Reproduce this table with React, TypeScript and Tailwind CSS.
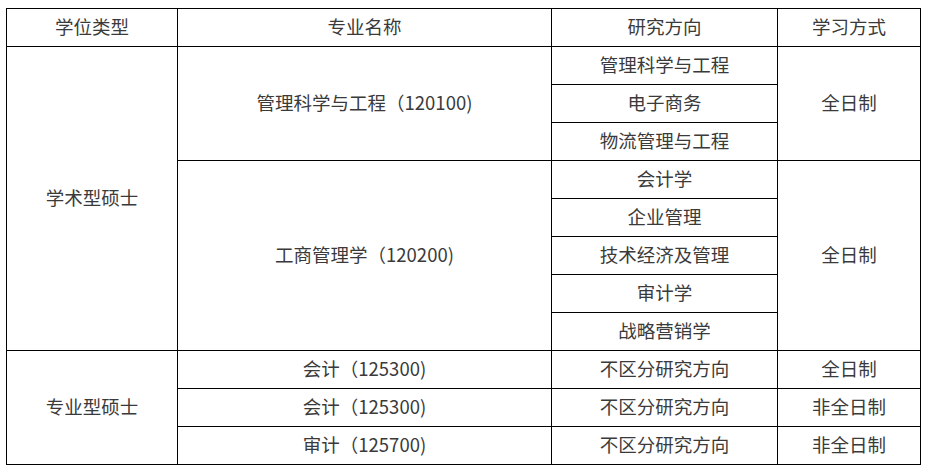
import React from "react";

interface MajorRow {
  degree?: { label: string; span: number };
  major?: { label: string; span: number };
  direction: string;
  mode?: { label: string; span: number };
}

const rows: MajorRow[] = [
  {
    degree: { label: "学术型硕士", span: 8 },
    major: { label: "管理科学与工程（120100)", span: 3 },
    direction: "管理科学与工程",
    mode: { label: "全日制", span: 3 },
  },
  { direction: "电子商务" },
  { direction: "物流管理与工程" },
  {
    major: { label: "工商管理学（120200)", span: 5 },
    direction: "会计学",
    mode: { label: "全日制", span: 5 },
  },
  { direction: "企业管理" },
  { direction: "技术经济及管理" },
  { direction: "审计学" },
  { direction: "战略营销学" },
  {
    degree: { label: "专业型硕士", span: 3 },
    major: { label: "会计（125300)", span: 1 },
    direction: "不区分研究方向",
    mode: { label: "全日制", span: 1 },
  },
  {
    major: { label: "会计（125300)", span: 1 },
    direction: "不区分研究方向",
    mode: { label: "非全日制", span: 1 },
  },
  {
    major: { label: "审计（125700)", span: 1 },
    direction: "不区分研究方向",
    mode: { label: "非全日制", span: 1 },
  },
];

const cell = "border border-black text-center align-middle p-0 pb-[3px]";

export default function App() {
  return (
    <div
      className="w-[929px] h-[468px] bg-white pl-[6px] pt-[8px] text-[#3a3a3a] text-[18.5px] leading-none"
      style={{ fontFamily: '"Noto Sans CJK SC", "Noto Sans", sans-serif' }}
    >
      <table className="border-collapse table-fixed w-[914px]">
        <colgroup>
          <col className="w-[171px]" />
          <col className="w-[374px]" />
          <col className="w-[226px]" />
          <col className="w-[143px]" />
        </colgroup>
        <thead>
          <tr className="h-[38px]">
            <th className={`${cell} font-normal`}>学位类型</th>
            <th className={`${cell} font-normal`}>专业名称</th>
            <th className={`${cell} font-normal`}>研究方向</th>
            <th className={`${cell} font-normal`}>学习方式</th>
          </tr>
        </thead>
        <tbody>
          {rows.map((r, i) => (
            <tr key={i} className="h-[38px]">
              {r.degree && (
                <td rowSpan={r.degree.span} className={cell}>
                  {r.degree.label}
                </td>
              )}
              {r.major && (
                <td rowSpan={r.major.span} className={cell}>
                  {r.major.label}
                </td>
              )}
              <td className={cell}>{r.direction}</td>
              {r.mode && (
                <td rowSpan={r.mode.span} className={cell}>
                  {r.mode.label}
                </td>
              )}
            </tr>
          ))}
        </tbody>
      </table>
    </div>
  );
}
